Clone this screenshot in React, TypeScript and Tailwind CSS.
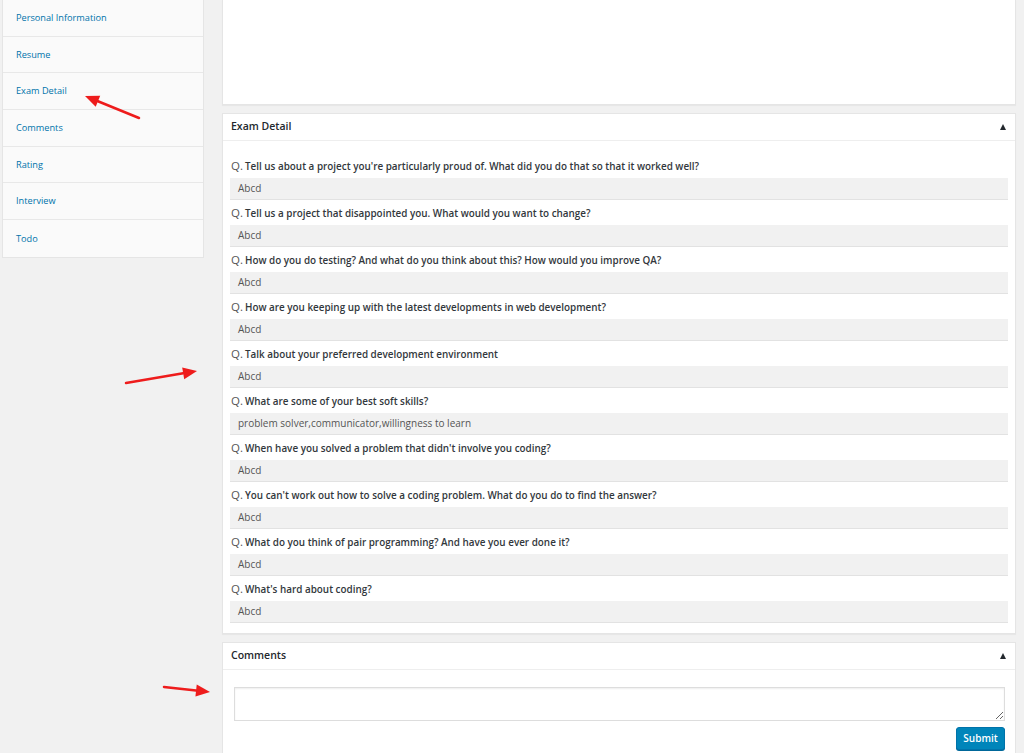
import React from 'react';

const NAV_ITEMS = ['Personal Information', 'Resume', 'Exam Detail', 'Comments', 'Rating', 'Interview', 'Todo'];

const QUESTIONS: { q: string; a: string }[] = [
  { q: "Tell us about a project you're particularly proud of. What did you do that so that it worked well?", a: 'Abcd' },
  { q: 'Tell us a project that disappointed you. What would you want to change?', a: 'Abcd' },
  { q: 'How do you do testing? And what do you think about this? How would you improve QA?', a: 'Abcd' },
  { q: 'How are you keeping up with the latest developments in web development?', a: 'Abcd' },
  { q: 'Talk about your preferred development environment', a: 'Abcd' },
  { q: 'What are some of your best soft skills?', a: 'problem solver,communicator,willingness to learn' },
  { q: "When have you solved a problem that didn't involve you coding?", a: 'Abcd' },
  { q: "You can't work out how to solve a coding problem. What do you do to find the answer?", a: 'Abcd' },
  { q: 'What do you think of pair programming? And have you ever done it?', a: 'Abcd' },
  { q: "What's hard about coding?", a: 'Abcd' },
];

// Red annotation arrow drawn over the screenshot
const Arrow = ({ x1, y1, x2, y2 }: { x1: number; y1: number; x2: number; y2: number }) => {
  const ang = Math.atan2(y2 - y1, x2 - x1);
  const len = 14;
  const w = 6;
  const bx = x2 - Math.cos(ang) * len;
  const by = y2 - Math.sin(ang) * len;
  const px = -Math.sin(ang) * w;
  const py = Math.cos(ang) * w;
  return (
    <>
      <line x1={x1} y1={y1} x2={bx} y2={by} stroke="#ee1c1c" strokeWidth="2.5" strokeLinecap="round" />
      <polygon points={`${x2},${y2} ${bx + px},${by + py} ${bx - px},${by - py}`} fill="#ee1c1c" />
    </>
  );
};

const Caret = () => (
  <span className="w-0 h-0 border-l-[3.5px] border-r-[3.5px] border-b-[6px] border-l-transparent border-r-transparent border-b-[#23282d]" />
);

const PanelHeader = ({ title }: { title: string }) => (
  <div className="h-[27px] flex items-center justify-between pl-[8px] pr-[9px] border-b border-[#eeeeee]">
    <span className="text-[10.5px] font-semibold text-[#23282d]">{title}</span>
    <Caret />
  </div>
);

export default function App() {
  return (
    <div
      className="relative w-[1024px] h-[753px] overflow-hidden bg-[#f1f1f1] flex"
      style={{ fontFamily: '"Open Sans", "Noto Sans", sans-serif' }}
    >
      {/* Sidebar tabs */}
      <aside className="ml-[2px] w-[202px] self-start bg-[#fafafa] border-l border-r border-b border-[#e5e5e5]">
        {NAV_ITEMS.map((item, i) => (
          <div
            key={item}
            className={`h-[36.7px] flex items-center pl-[13px] text-[9.2px] text-[#0073aa] ${i < NAV_ITEMS.length - 1 ? 'border-b border-[#e8e8e8]' : ''}`}
          >
            {item}
          </div>
        ))}
      </aside>

      {/* Main column */}
      <main className="ml-[18px] w-[794px] flex flex-col gap-[8px]">
        <div className="shrink-0 h-[105px] bg-white border border-t-0 border-[#e5e5e5] shadow-[0_1px_1px_rgba(0,0,0,0.04)]" />

        <section className="shrink-0 bg-white border border-[#e5e5e5] shadow-[0_1px_1px_rgba(0,0,0,0.04)]">
          <PanelHeader title="Exam Detail" />
          <div className="pt-[12px] pb-[10px] px-[7px]">
            {QUESTIONS.map((item, i) => (
              <div key={i}>
                <div className="h-[25px] flex items-center pl-[1px] pt-[1px]">
                  <span className="text-[11.5px] text-[#555] mr-[2px]">Q.</span>
                  <span className="text-[9.9px] font-semibold text-[#32373c]">{item.q}</span>
                </div>
                <div className="h-[22px] flex items-center pl-[8px] bg-[#f1f1f1] border-b border-[#e2e2e2] text-[10px] text-[#555]">
                  {item.a}
                </div>
              </div>
            ))}
          </div>
        </section>

        <section className="shrink-0 bg-white border border-[#e5e5e5] h-[140px]">
          <PanelHeader title="Comments" />
          <div className="pt-[17px] pl-[11px] pr-[10px] flex flex-col items-end">
            <textarea className="w-full h-[34px] border border-[#ddd] shadow-[inset_0_1px_2px_rgba(0,0,0,0.07)] resize-y" />
            <button className="mt-[6px] h-[23px] w-[49px] rounded-[3px] bg-[#0085ba] border border-[#0073aa] text-white text-[10px] font-semibold shadow-[0_1px_0_#006799]">
              Submit
            </button>
          </div>
        </section>
      </main>

      {/* Annotation arrows */}
      <svg className="absolute inset-0 pointer-events-none" width="1024" height="753">
        <Arrow x1={139} y1={118} x2={85} y2={96} />
        <Arrow x1={126} y1={383} x2={197} y2={371} />
        <Arrow x1={164} y1={687} x2={210} y2={692} />
      </svg>
    </div>
  );
}
